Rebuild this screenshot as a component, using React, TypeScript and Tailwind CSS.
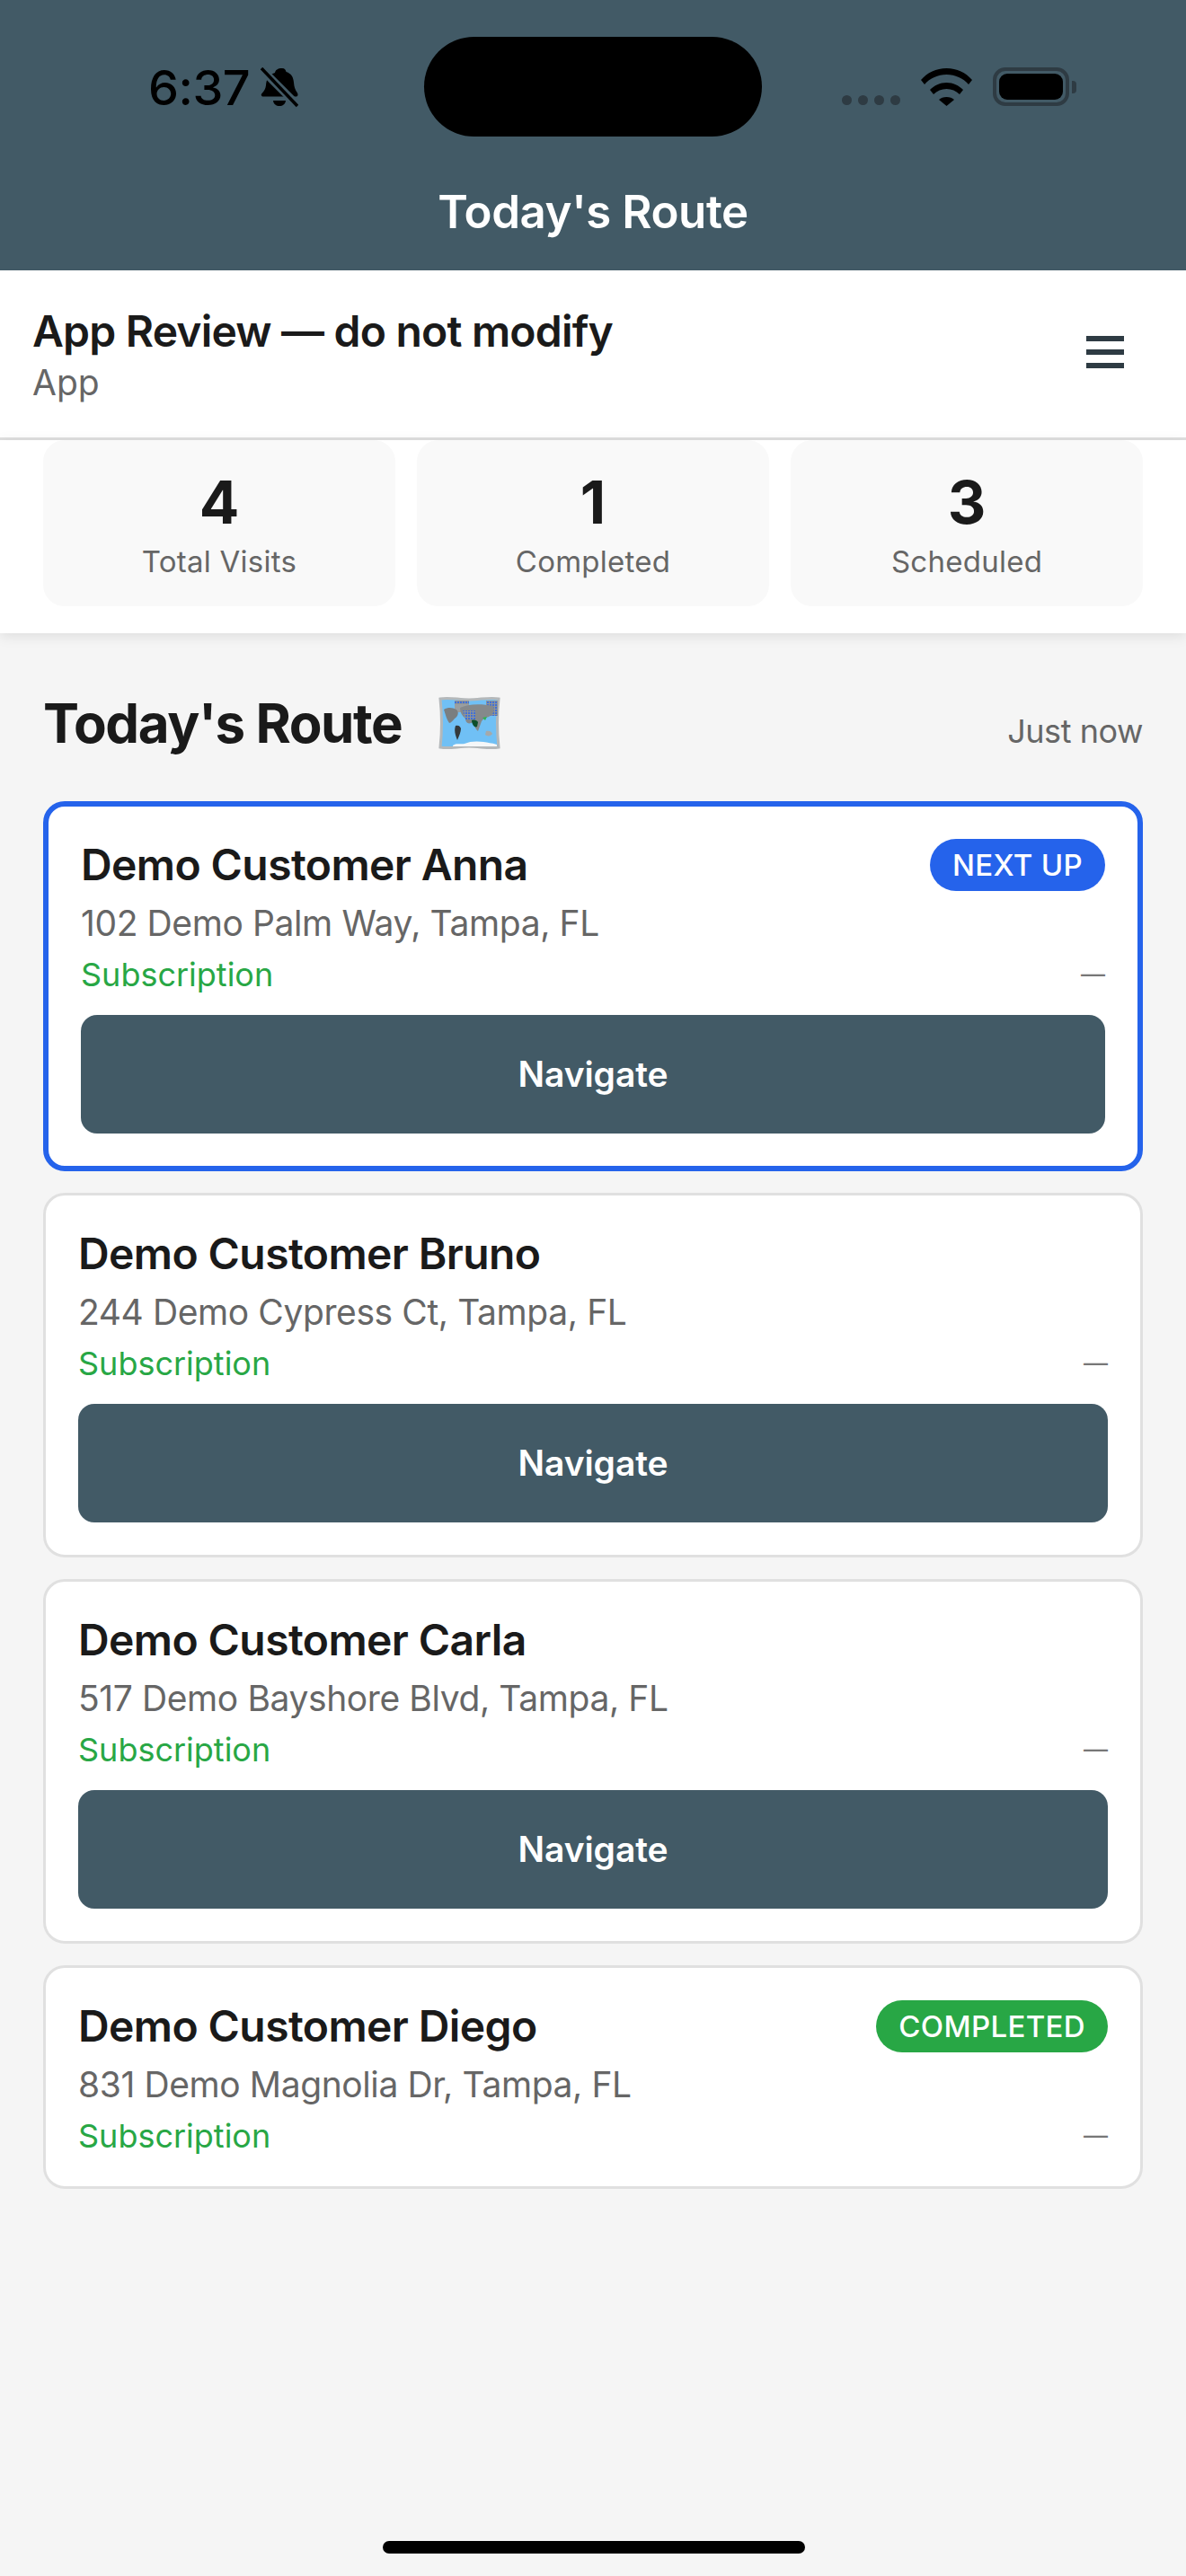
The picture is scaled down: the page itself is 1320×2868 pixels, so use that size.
import React from "react";

const font = { fontFamily: "Inter, 'Liberation Sans', sans-serif" };

function BellOff() {
  return (
    <svg width="42" height="46" viewBox="0 0 42 46" className="block">
      <path d="M24 1c3 0 4 2 4.500 4 6 2 8 6 8.500 12 .4 5 1.500 8 4 11.500 1 2 .5 4-1.500 4H3c-2 0-3-2-1.500-3.500 2.500-3 4-5 4.500-9 .5-7 3-12 10-14 .5-3 3-5 8-5z" fill="#000" />
      <path d="M14 37h14c-.5 4-3.500 6-7 6s-6.500-2-7-6z" fill="#000" />
      <path d="M0 1L42 43" stroke="#425a66" strokeWidth="9" />
      <path d="M1 1L41 43" stroke="#000" strokeWidth="3.500" />
    </svg>
  );
}

function Wifi() {
  return (
    <svg width="57" height="42" viewBox="0 0 57 42" className="block">
      <path d="M0 13C7 5 17 0 28.500 0S50 5 57 13l-4 5C47 11 38 7 28.500 7S10 11 4 18z" fill="#000" />
      <path d="M10 24c5-5 11-8 18.500-8S42 19 47 24l-4 5c-4-4-9-6-14.500-6S18 25 14 29z" fill="#000" />
      <path d="M20 35c2-2 5-3 8.500-3s6.500 1 8.500 3L28.500 42z" fill="#000" />
    </svg>
  );
}

function Battery() {
  return (
    <div className="flex items-center gap-[3px]">
      <div className="flex h-[43px] w-[85px] items-center justify-center rounded-[14px] border-[4px] border-[#2e3b43]">
        <div className="h-[29px] w-[71px] rounded-[9px] bg-black" />
      </div>
      <div className="h-[14px] w-[5px] rounded-r-[4px] bg-[#2e3b43]" />
    </div>
  );
}

function MapEmoji() {
  return (
    <svg width="69" height="60" viewBox="0 0 69 60" className="block">
      <defs>
        <pattern id="dots" width="3" height="3" patternUnits="userSpaceOnUse">
          <rect width="3" height="3" fill="#8f9496" />
          <rect width="2" height="2" fill="#3f6fd8" />
        </pattern>
      </defs>
      <path d="M2 3c10-2 20 1 32 1s23-3 33-1c-2 18-2 36 0 54-10 2-21-1-33-1S12 59 2 57C4 39 4 21 2 3z" fill="#70c0f5" stroke="#b4b8ba" strokeWidth="3" />
      <path d="M18 5h16v13H18z" fill="#9a9ea0" />
      <path d="M18 5h16v4H18z" fill="url(#dots)" />
      <path d="M53 5h13v17H53z" fill="url(#dots)" />
      <path d="M6 15c5-3 10-2 14 0 3 3 2 7-2 10-2 2-4 5-6 5-3-4-4-9-6-15z" fill="#7a7e80" />
      <path d="M19 33c4-1 5 1 6 3 0 4-2 8-4 13-2-5-4-10-2-16z" fill="#34393b" />
      <path d="M24 13c8-4 22-5 37-2 2 5 0 10-5 12-3 1-6 2-8 5l-4 11c-3-2-4-7-6-10-4 3-8 1-8-4-4-3-6-7-6-12z" fill="#85898b" />
      <path d="M27 16h14v10H30z" fill="url(#dots)" />
      <path d="M37 27c3-1 6 0 7 2l-1 5c-3 2-6-3-6-7z" fill="#0e4f2b" />
      <path d="M49 24l5-1-2 4z" fill="#2fb050" />
      <path d="M53 39c3-1 6 0 7 3-2 3-6 3-8 1z" fill="#a5a9aa" />
      <path d="M16 55c4-3 9-1 13-2 6-3 15-3 21-2 5 1 9 1 15 3v2H16z" fill="#f5f7f8" />
    </svg>
  );
}

function Visit({ name, address, badge, next, nav }: { name: string; address: string; badge?: string; next?: boolean; nav?: boolean }) {
  return (
    <div className={next ? "rounded-[24px] border-[6px] border-[#2563eb] bg-white p-[36px]" : "rounded-[24px] border-[3px] border-[#e0e0e0] bg-white p-[36px]"}>
      <div className="flex h-[58px] items-center justify-between">
        <div className="text-[48px] font-semibold leading-[58px] tracking-[-0.6px] text-[#1a1a1a]">{name}</div>
        {badge && (
          <div className={next ? "rounded-full bg-[#2563eb] px-[25px] py-[9px] text-[33px] font-medium leading-[40px] tracking-[0.35px] text-white" : "rounded-full bg-[#28a745] px-[25px] py-[9px] text-[33px] font-medium leading-[40px] tracking-[0.35px] text-white"}>
            {badge}
          </div>
        )}
      </div>
      <div className="mt-[12px] text-[39px] leading-[48px] tracking-[-0.4px] text-[#666666]">{address}</div>
      <div className="mt-[13px] flex items-center justify-between text-[36px] leading-[40px]">
        <span className="text-[#28a745]">Subscription</span>
        <span className="text-[27px] text-[#777777]">—</span>
      </div>
      {nav && (
        <div className="mt-[25px] flex h-[132px] items-center justify-center rounded-[18px] bg-[#425a66] text-[39px] font-semibold tracking-[-0.1px] text-white">
          Navigate
        </div>
      )}
    </div>
  );
}

function Stat({ value, label }: { value: string; label: string }) {
  return (
    <div className="flex h-[185px] flex-1 flex-col items-center rounded-[24px] bg-[#f9f9f9] pt-[27px]">
      <div className="text-[66px] font-bold leading-[84px] text-[#1a1a1a]">{value}</div>
      <div className="mt-[3px] text-[33px] leading-[42px] tracking-[0.25px] text-[#666666]">{label}</div>
    </div>
  );
}

export default function App() {
  return (
    <div className="relative flex h-[2868px] w-[1320px] flex-col overflow-hidden bg-[#f5f5f5]" style={font}>
      <header className="flex h-[301px] flex-col bg-[#425a66]">
        <div className="flex h-[206px] items-start">
          <div className="flex w-[472px] items-start pl-[165px] pt-[71px]">
            <span className="text-[54px] font-medium leading-[54px] tracking-[-0.5px] text-black">6:37</span>
            <span className="ml-[12px] mt-[4px]"><BellOff /></span>
          </div>
          <div className="mt-[41px] h-[111px] w-[376px] rounded-full bg-black" />
          <div className="flex items-end pl-[89px] pt-[75px]">
            <div className="mb-[1px] flex gap-[7px]">
              <i className="h-[11px] w-[11px] rounded-full bg-[#2e3b43]" />
              <i className="h-[11px] w-[11px] rounded-full bg-[#2e3b43]" />
              <i className="h-[11px] w-[11px] rounded-full bg-[#2e3b43]" />
              <i className="h-[11px] w-[11px] rounded-full bg-[#2e3b43]" />
            </div>
            <span className="ml-[23px]"><Wifi /></span>
            <span className="ml-[23px]"><Battery /></span>
          </div>
        </div>
        <div className="text-center text-[51px] font-semibold leading-[60px] tracking-[-0.4px] text-white">Today's Route</div>
      </header>

      <div className="flex h-[189px] items-center justify-between border-b-[3px] border-[#e0e0e0] bg-white pl-[36px] pr-[69px]">
        <div className="pt-[1px]">
          <div className="text-[48px] font-semibold leading-[58px] tracking-[-0.8px] text-[#1a1a1a]">App Review — do not modify</div>
          <div className="mt-[4px] text-[39px] leading-[48px] text-[#666666]">App</div>
        </div>
        <div className="mb-[4px] flex w-[42px] flex-col gap-[9px]">
          <i className="h-[6px] bg-[#2e3b43]" />
          <i className="h-[6px] bg-[#2e3b43]" />
          <i className="h-[6px] bg-[#2e3b43]" />
        </div>
      </div>

      <div className="flex h-[215px] gap-[24px] bg-white px-[48px] shadow-[0_3px_14px_rgba(0,0,0,0.1)]">
        <Stat value="4" label="Total Visits" />
        <Stat value="1" label="Completed" />
        <Stat value="3" label="Scheduled" />
      </div>

      <main className="px-[48px]">
        <div className="flex h-[187px] items-center justify-between pt-[13px]">
          <div className="flex items-center">
            <span className="text-[60px] font-bold tracking-[-1.4px] text-[#1a1a1a]">Today's Route</span>
            <span className="ml-[41px]"><MapEmoji /></span>
          </div>
          <span className="mt-[18px] text-[36px] tracking-[-0.45px] text-[#666666]">Just now</span>
        </div>
        <div className="flex flex-col gap-[24px]">
          <Visit name="Demo Customer Anna" address="102 Demo Palm Way, Tampa, FL" badge="NEXT UP" next nav />
          <Visit name="Demo Customer Bruno" address="244 Demo Cypress Ct, Tampa, FL" nav />
          <Visit name="Demo Customer Carla" address="517 Demo Bayshore Blvd, Tampa, FL" nav />
          <Visit name="Demo Customer Diego" address="831 Demo Magnolia Dr, Tampa, FL" badge="COMPLETED" />
        </div>
      </main>

      <div className="absolute bottom-[25px] left-[426px] h-[14px] w-[470px] rounded-full bg-black" />
    </div>
  );
}
